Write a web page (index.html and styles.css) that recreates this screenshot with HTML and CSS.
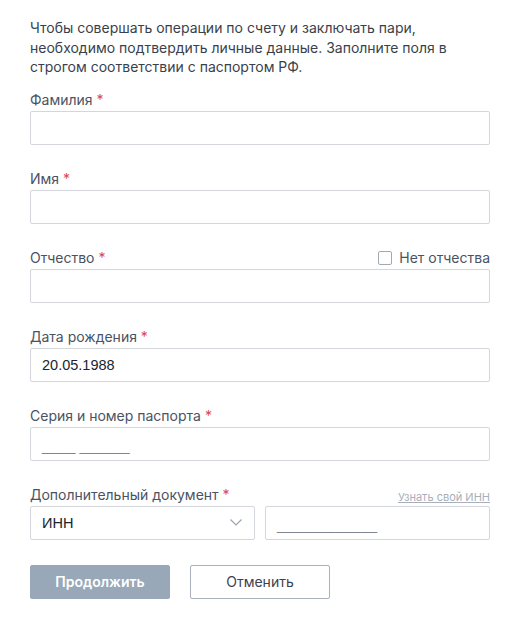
FILE: index.html
```html
<!DOCTYPE html>
<html lang="ru">
<head>
<meta charset="utf-8">
<link rel="stylesheet" href="styles.css">
</head>
<body>
<div class="page">
  <p class="intro">Чтобы совершать операции по счету и заключать пари, необходимо подтвердить личные данные. Заполните поля в строгом соответствии с паспортом РФ.</p>

  <div class="field">
    <div class="label-row"><span class="label">Фамилия <span class="req">*</span></span></div>
    <div class="input"></div>
  </div>

  <div class="field">
    <div class="label-row"><span class="label">Имя <span class="req">*</span></span></div>
    <div class="input"></div>
  </div>

  <div class="field">
    <div class="label-row">
      <span class="label">Отчество <span class="req">*</span></span>
      <label class="check"><span class="box"></span>Нет отчества</label>
    </div>
    <div class="input"></div>
  </div>

  <div class="field">
    <div class="label-row"><span class="label">Дата рождения <span class="req">*</span></span></div>
    <div class="input"><span class="value">20.05.1988</span></div>
  </div>

  <div class="field">
    <div class="label-row"><span class="label">Серия и номер паспорта <span class="req">*</span></span></div>
    <div class="input"><span class="mask">____ ______</span></div>
  </div>

  <div class="field">
    <div class="label-row">
      <span class="label">Дополнительный документ <span class="req">*</span></span>
      <a class="hint">Узнать свой ИНН</a>
    </div>
    <div class="split">
      <div class="input select"><span class="value">ИНН</span>
        <svg class="chev" width="12" height="7" viewBox="0 0 12 7"><path d="M0.5 0.5 L6 6 L11.5 0.5" fill="none" stroke="#9aa1ab" stroke-width="1.1"/></svg>
      </div>
      <div class="input"><span class="mask">____________</span></div>
    </div>
  </div>

  <div class="buttons">
    <button class="btn primary">Продолжить</button>
    <button class="btn secondary">Отменить</button>
  </div>
</div>
</body>
</html>
```

FILE: styles.css
```css
html, body {
  margin: 0;
  padding: 0;
  background: #fff;
}
.page {
  padding: 18px 16px 0 30px;
  font-family: Inter, "Noto Sans", sans-serif;
  font-size: 14px;
  color: #3b4150;
}
.intro {
  margin: 0 0 14px 0;
  line-height: 19.5px;
  color: #3a3f4c;
  width: 440px;
}
.field {
  margin-bottom: 25px;
}
.label-row {
  display: flex;
  justify-content: space-between;
  align-items: center;
  height: 18px;
  margin-bottom: 2px;
  padding-top: 1px;
  margin-top: -1px;
}
.label {
  color: #4a5263;
  font-size: 14px;
  line-height: 18px;
}
.req {
  color: #d9484a;
}
.check {
  display: flex;
  align-items: center;
  gap: 7px;
  color: #4a5263;
  font-size: 14px;
}
.box {
  width: 12px;
  height: 12px;
  border: 1px solid #a3a9b3;
  border-radius: 2px;
  background: #fff;
}
.hint {
  font-size: 11px;
  color: #a7afbb;
  text-decoration: underline;
  align-self: flex-end;
  line-height: 14px;
}
.input {
  height: 32px;
  border: 1px solid #d3d6db;
  border-radius: 2px;
  background: #fff;
  display: flex;
  align-items: center;
  padding: 0 11px;
}
.value {
  font-family: "Liberation Sans", Arial, sans-serif;
  font-size: 14.5px;
  color: #202430;
}
.mask {
  font-family: "Liberation Sans", Arial, sans-serif;
  font-size: 15px;
  color: #7f8590;
  padding-top: 4px;
}
.split {
  display: grid;
  grid-template-columns: 1fr 1fr;
  gap: 10px;
}
.select {
  justify-content: space-between;
}
.chev {
  margin-right: 1px;
}
.buttons {
  display: flex;
  gap: 20px;
  margin-top: 0;
}
.btn {
  width: 140px;
  height: 34px;
  border-radius: 2px;
  font-family: Inter, "Noto Sans", sans-serif;
  font-size: 14px;
  cursor: pointer;
}
.primary {
  background: #98a8b8;
  border: 1px solid #98a8b8;
  color: #fff;
  font-weight: 600;
}
.secondary {
  background: #fff;
  border: 1px solid #a9b1bc;
  color: #3b4150;
}
```
